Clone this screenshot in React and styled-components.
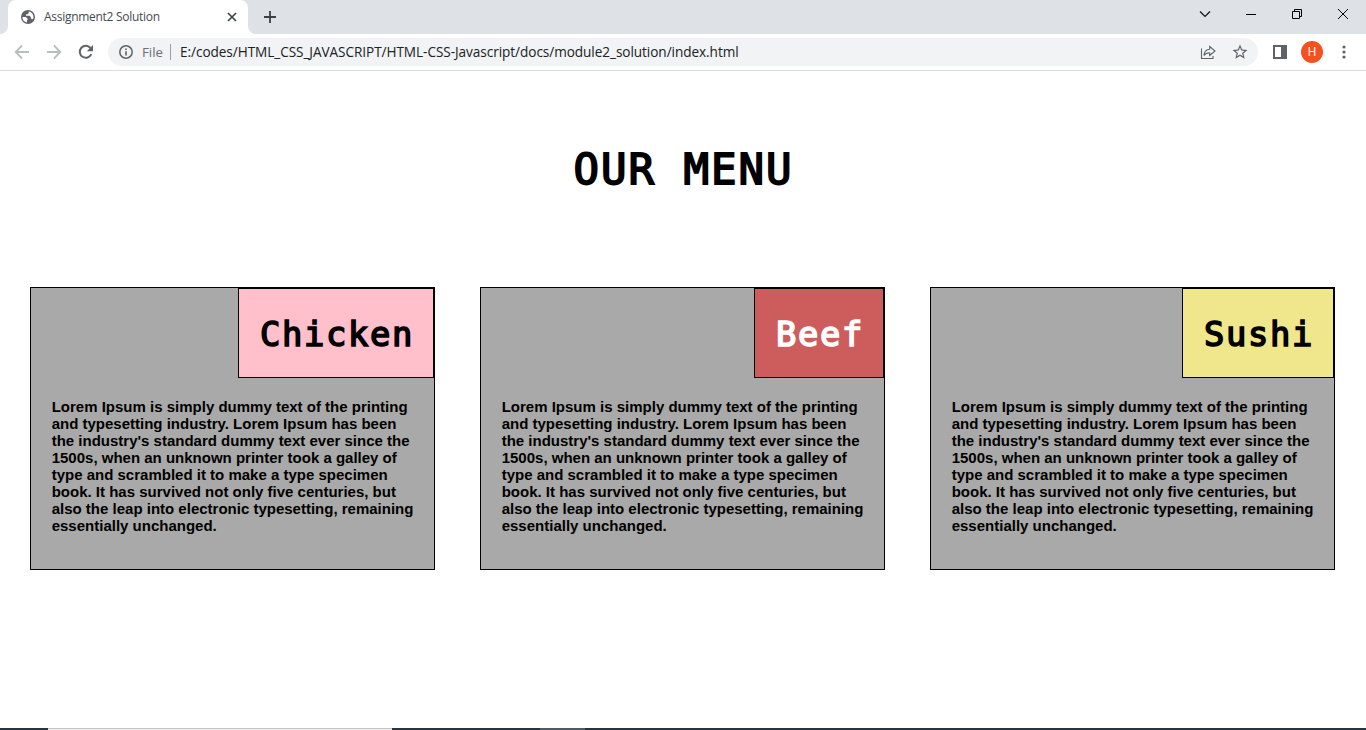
import React from "react";
import styled, { createGlobalStyle } from "styled-components";

const Global = createGlobalStyle`
  *{box-sizing:border-box}
  body{margin:0;background:#fff;overflow:hidden;font-family:"Liberation Sans",Arial,sans-serif}
  svg{display:block;flex:none}
`;
const Window = styled.div`width:1366px;height:730px;display:flex;flex-direction:column;background:#fff;`;
const TabStrip = styled.div`height:34px;background:#dee1e6;display:flex;align-items:stretch;`;
const Shoulder = styled.div`
  width:8px;align-self:flex-end;height:8px;
  background:radial-gradient(circle at ${p => (p.$right ? "100%" : "0")} 0,#dee1e6 7.5px,#fff 8.5px);
`;
const Tab = styled.div`
  width:240px;background:#fff;border-radius:8px 8px 0 0;display:flex;align-items:center;padding:0 10px 0 12px;
`;
const TabTitle = styled.span`
  font:12px/16px "Open Sans","Noto Sans",sans-serif;color:#45494d;margin-left:8px;flex:1;white-space:nowrap;
  letter-spacing:-0.28px;
`;
const NewTab = styled.div`display:flex;align-items:center;padding-left:7px;flex:1;`;
const WindowButtons = styled.div`display:flex;height:28px;`;
const WindowButton = styled.div`width:46px;display:flex;justify-content:center;align-items:center;`;
const Toolbar = styled.div`
  height:37px;border-bottom:1px solid #dadce0;display:flex;align-items:center;padding:0 0 0 14px;
`;
const Nav = styled.div`display:flex;gap:16px;width:94px;`;
const Omnibox = styled.div`
  width:1150px;height:28px;border-radius:14px;background:#f1f3f4;display:flex;align-items:center;padding:0 9px 0 10px;
`;
const Scheme = styled.span`font:13.3px/18px "Open Sans","Noto Sans",sans-serif;color:#6b6f74;margin-left:8px;width:20px;white-space:nowrap;`;
const Divider = styled.i`width:1px;height:16px;background:#9aa0a6;margin:0 9px 0 8px;`;
const Url = styled.span`
  font:13.6px/18px "Open Sans","Noto Sans",sans-serif;color:#202124;white-space:nowrap;letter-spacing:-0.06px;flex:1;
`;
const Actions = styled.div`display:flex;align-items:center;gap:15px;`;
const Tools = styled.div`display:flex;align-items:center;padding-left:14px;`;
const Avatar = styled.div`
  width:22px;height:22px;border-radius:50%;background:#f4511e;color:#fff;font:12px/22px Roboto,sans-serif;
  text-align:center;margin:0 16px 0 13px;
`;
const Page = styled.main`flex:1;display:flex;flex-direction:column;`;
const Title = styled.h1`
  margin:69px 0 87px;height:60px;font:400 42.4px/60px "DejaVu Sans Mono",monospace;text-align:center;color:#000;
  letter-spacing:1.98px;text-indent:1px;-webkit-text-stroke:1.8px #000;
`;
const Menu = styled.div`display:flex;gap:45px;padding-left:30px;`;
const Card = styled.section`
  width:405px;height:283px;background:#a9a9a9;border:1px solid #000;display:flex;flex-direction:column;
`;
const Name = styled.h2`
  margin:0;align-self:flex-end;height:90px;width:${p => p.$width}px;border:1px solid #000;
  background:${p => p.$fill};color:${p => p.$ink};padding:2px 0 0 21px;white-space:nowrap;
  font:400 33.8px/88px "DejaVu Sans Mono",monospace;letter-spacing:1.65px;-webkit-text-stroke:1.6px ${p => p.$ink};
`;
const Text = styled.p`
  margin:20px 0 0 20.7px;width:370px;font-weight:700;font-size:15px;line-height:17px;color:#000;
`;
const Taskbar = styled.div`height:2px;display:flex;background:#243642;`;
const TaskPart = styled.div`width:${p => p.$width}px;background:${p => p.$fill || "transparent"};`;

const Icon = ({ size = 16, box = 24, color = "#5f6368", children }) => (
  <svg width={size} height={size} viewBox={`0 0 ${box} ${box}`} fill={color}>{children}</svg>
);

const lorem = "Lorem Ipsum is simply dummy text of the printing and typesetting industry. Lorem Ipsum has been the industry's standard dummy text ever since the 1500s, when an unknown printer took a galley of type and scrambled it to make a type specimen book. It has survived not only five centuries, but also the leap into electronic typesetting, remaining essentially unchanged.";
const dishes = [
  { name: "Chicken", width: 196, fill: "#ffc0cb", ink: "#000" },
  { name: "Beef", width: 130, fill: "#cd5c5c", ink: "#fff" },
  { name: "Sushi", width: 152, fill: "#f0e68c", ink: "#000" },
];

export default function App() {
  return (
    <Window>
      <Global />
      <TabStrip>
        <Shoulder />
        <Tab>
          <Icon><path d="M12 1.5a10.5 10.5 0 1 0 0 21 10.5 10.5 0 0 0 0-21zM10.5 20.2A8.3 8.3 0 0 1 3.7 12h5.1l2.7 2.6v2h-1zm8.8-4.3c-.5-.8-1-1.4-2-1.4h-1v-2.600l-2-1.900H9V8h2.300l1.800-1.800V3.800c3.900.5 7.100 4 7.100 8.200 0 1.400-.3 2.700-.9 3.900z" /></Icon>
          <TabTitle>Assignment2 Solution</TabTitle>
          <Icon size={12} box={12}><path d="M2 2l8 8M10 2l-8 8" stroke="#3c4043" strokeWidth="1.6" /></Icon>
        </Tab>
        <Shoulder $right />
        <NewTab><Icon size={14} box={14}><path d="M7 1v12M1 7h12" stroke="#3c4043" strokeWidth="1.8" /></Icon></NewTab>
        <WindowButtons>
          <WindowButton><Icon size={12} box={12}><path d="M1 3.500l5 5 5-5" fill="none" stroke="#111" strokeWidth="1.200" /></Icon></WindowButton>
          <WindowButton><Icon size={12} box={12}><path d="M1 6.500h10" stroke="#000" /></Icon></WindowButton>
          <WindowButton><Icon size={12} box={12}><path d="M1.500 3.500h7v7h-7zM3.500 3.500v-2h7v7h-2" fill="none" stroke="#000" /></Icon></WindowButton>
          <WindowButton><Icon size={12} box={12}><path d="M1 1l10 10M11 1L1 11" stroke="#000" /></Icon></WindowButton>
        </WindowButtons>
      </TabStrip>
      <Toolbar>
        <Nav>
          <Icon box={16}><path d="M15 8H2M8 1.500L1.700 8 8 14.500" fill="none" stroke="#babcbe" strokeWidth="1.8" /></Icon>
          <Icon box={16}><path d="M1 8h13M8 1.500L14.300 8 8 14.500" fill="none" stroke="#babcbe" strokeWidth="1.8" /></Icon>
          <Icon box={16}><path d="M13.300 10.200A6 6 0 1 1 12.500 4" fill="none" stroke="#5f6368" strokeWidth="2" /><path d="M15 1v6.200H8.800z" /></Icon>
        </Nav>
        <Omnibox>
          <Icon box={16}><circle cx="8" cy="8" r="6.2" fill="none" stroke="#5f6368" strokeWidth="1.5" /><path d="M7.200 7.200h1.600v4.300H7.200zM7.200 4.500h1.600v1.600H7.200z" /></Icon>
          <Scheme>File</Scheme>
          <Divider />
          <Url>E:/codes/HTML_CSS_JAVASCRIPT/HTML-CSS-Javascript/docs/module2_solution/index.html</Url>
          <Actions>
            <Icon box={16}><path d="M1.500 4.500v10h11.500v-2.500M4 11.500c.4-4 2.300-6 5.700-6.200V2.500L15 7l-5.300 4.500V8.700C7 8.700 5.300 9.500 4 11.500z" fill="none" stroke="#5f6368" strokeWidth="1.100" /></Icon>
            <Icon size={18}><path d="M22 9.240l-7.190-.62L12 2 9.190 8.630 2 9.240l5.460 4.730L5.820 21 12 17.270 18.180 21l-1.630-7.030L22 9.240zM12 15.400l-3.760 2.270 1-4.280-3.320-2.880 4.380-.38L12 6.100l1.710 4.040 4.380.38-3.320 2.880 1 4.280L12 15.400z" /></Icon>
          </Actions>
        </Omnibox>
        <Tools>
          <Icon box={16}><path d="M1 1h14v14H1zM3 3v10h6V3z" fillRule="evenodd" /></Icon>
          <Avatar>H</Avatar>
          <Icon box={16}><circle cx="5" cy="3" r="1.6" /><circle cx="5" cy="8" r="1.6" /><circle cx="5" cy="13" r="1.6" /></Icon>
        </Tools>
      </Toolbar>
      <Page>
        <Title>OUR MENU</Title>
        <Menu>
          {dishes.map(d => (
            <Card key={d.name}>
              <Name $width={d.width} $fill={d.fill} $ink={d.ink}>{d.name}</Name>
              <Text>{lorem}</Text>
            </Card>
          ))}
        </Menu>
      </Page>
      <Taskbar>
        <TaskPart $width={48} />
        <TaskPart $width={344} $fill="linear-gradient(#c4c4c4 50%,#f0f0f0 50%)" />
        <TaskPart $width={148} />
        <TaskPart $width={45} $fill="#4d5b66" />
      </Taskbar>
    </Window>
  );
}
